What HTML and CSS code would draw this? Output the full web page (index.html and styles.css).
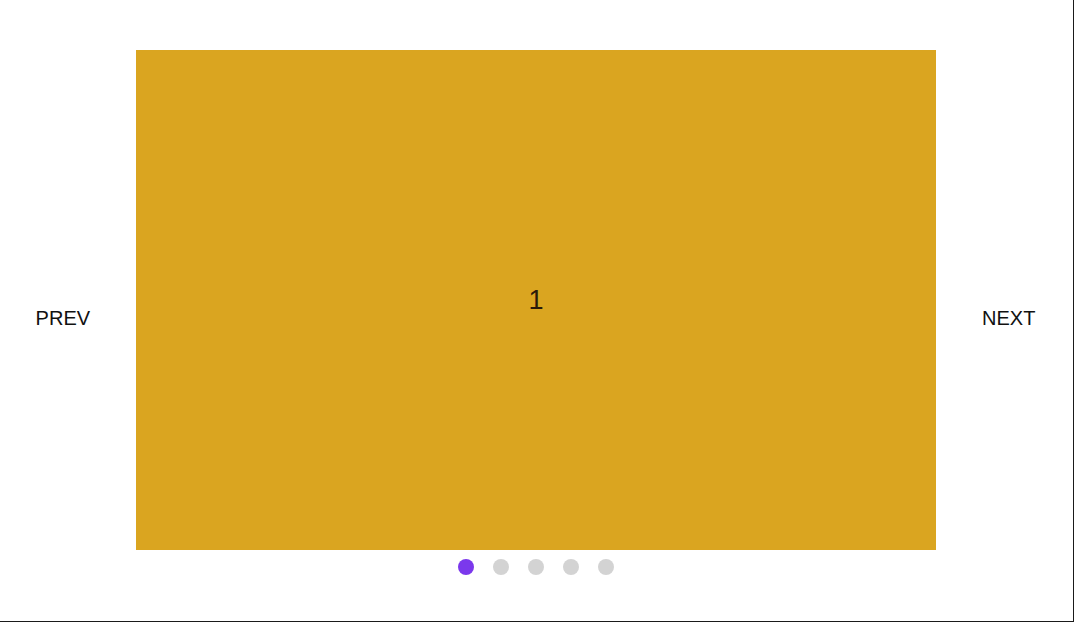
FILE: index.html
```html
<!DOCTYPE html>
<html>
<head>
<meta charset="utf-8">
<link rel="stylesheet" href="styles.css">
</head>
<body>
<div class="frame">
  <div class="carousel">
    <button class="nav">PREV</button>
    <div class="stage">
      <div class="slide"><span class="num">1</span></div>
      <div class="dots">
        <span class="dot active"></span>
        <span class="dot"></span>
        <span class="dot"></span>
        <span class="dot"></span>
        <span class="dot"></span>
      </div>
    </div>
    <button class="nav">NEXT</button>
  </div>
</div>
</body>
</html>
```
FILE: styles.css
```css
html, body {
  margin: 0;
  padding: 0;
  background: #fff;
}
.frame {
  box-sizing: border-box;
  width: 1074px;
  height: 622px;
  border-right: 1px solid #1a1a1a;
  border-bottom: 1px solid #1a1a1a;
  padding-top: 50px;
  font-family: "Liberation Sans", Arial, sans-serif;
}
.carousel {
  display: flex;
  align-items: center;
  justify-content: center;
  gap: 46px;
  width: 1071px;
}
.nav {
  background: none;
  border: none;
  padding: 0;
  margin: 0;
  font-family: "Liberation Sans", Arial, sans-serif;
  font-size: 20px;
  color: #111;
  line-height: 24px;
}
.stage {
  display: flex;
  flex-direction: column;
  align-items: center;
}
.slide {
  width: 800px;
  height: 500px;
  background: #daa520;
  display: flex;
  align-items: center;
  justify-content: center;
}
.num {
  font-size: 27px;
  color: #2a1a0a;
  font-weight: 300;
}
.dots {
  display: flex;
  gap: 19px;
  padding-top: 9px;
  padding-bottom: 11px;
}
.dot {
  width: 16px;
  height: 16px;
  border-radius: 50%;
  background: #d3d3d3;
}
.dot.active {
  background: #7b38ec;
}
```
